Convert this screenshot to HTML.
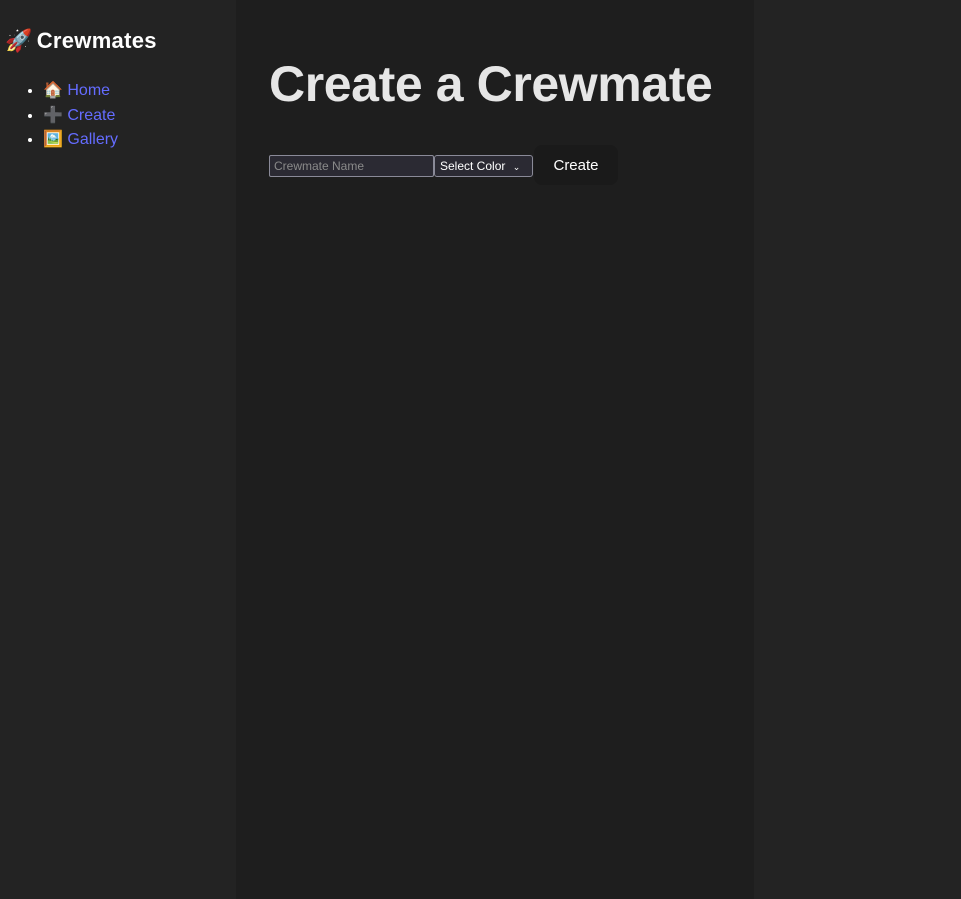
<!DOCTYPE html>
<html><head><meta charset="utf-8"><style>
html,body{margin:0;padding:0;width:961px;height:899px;overflow:hidden;background:#232323;font-family:"Liberation Sans",sans-serif;}
.side{position:absolute;left:0;top:0;width:236px;height:899px;background:#232323;}
.main{position:absolute;left:236px;top:0;width:518px;height:899px;background:#1e1e1e;}
.right{position:absolute;left:754px;top:0;width:207px;height:899px;background:#232323;}
.brand{position:absolute;left:5px;top:28px;color:#fff;font-weight:bold;font-size:22px;letter-spacing:0.3px;}
.brand span{margin-left:4px}
ul{position:absolute;left:0;top:79px;margin:0;padding-left:43px;color:#fff;font-size:16px;line-height:24.5px;}
li a{color:#646cff;text-decoration:none;}
h1{position:absolute;left:269px;top:55px;margin:0;color:#e6e6e6;font-size:50px;font-weight:bold;letter-spacing:-0.4px;}
.inp{position:absolute;left:269px;top:155px;border:1px solid #8a8a98;background:#2b2a33;color:#8a8a8a;font-size:12px;line-height:20px;padding-left:4px;box-sizing:border-box;width:165px;height:22px;border-radius:2px;}
.sel{position:absolute;left:434px;top:155px;width:99px;height:22px;box-sizing:border-box;border:1px solid #8a8a98;border-radius:3px;background:#2b2a33;color:#fff;font-size:12px;line-height:20px;padding-left:5px;}
.btn{position:absolute;left:534px;top:145px;width:84px;height:40px;background:#1a1a1a;border-radius:8px;color:#fff;font-size:15px;text-align:center;line-height:42px;}
</style></head><body>
<div class="side"></div><div class="main"></div><div class="right"></div>
<div class="brand">🚀<span>Crewmates</span></div>
<ul><li>🏠 <a>Home</a></li><li>➕ <a>Create</a></li><li>🖼️ <a>Gallery</a></li></ul>
<h1>Create a Crewmate</h1>
<div class="inp">Crewmate Name</div>
<div class="sel">Select Color <span style="font-size:9px;margin-left:4px">⌄</span></div>
<div class="btn">Create</div>
</body></html>
